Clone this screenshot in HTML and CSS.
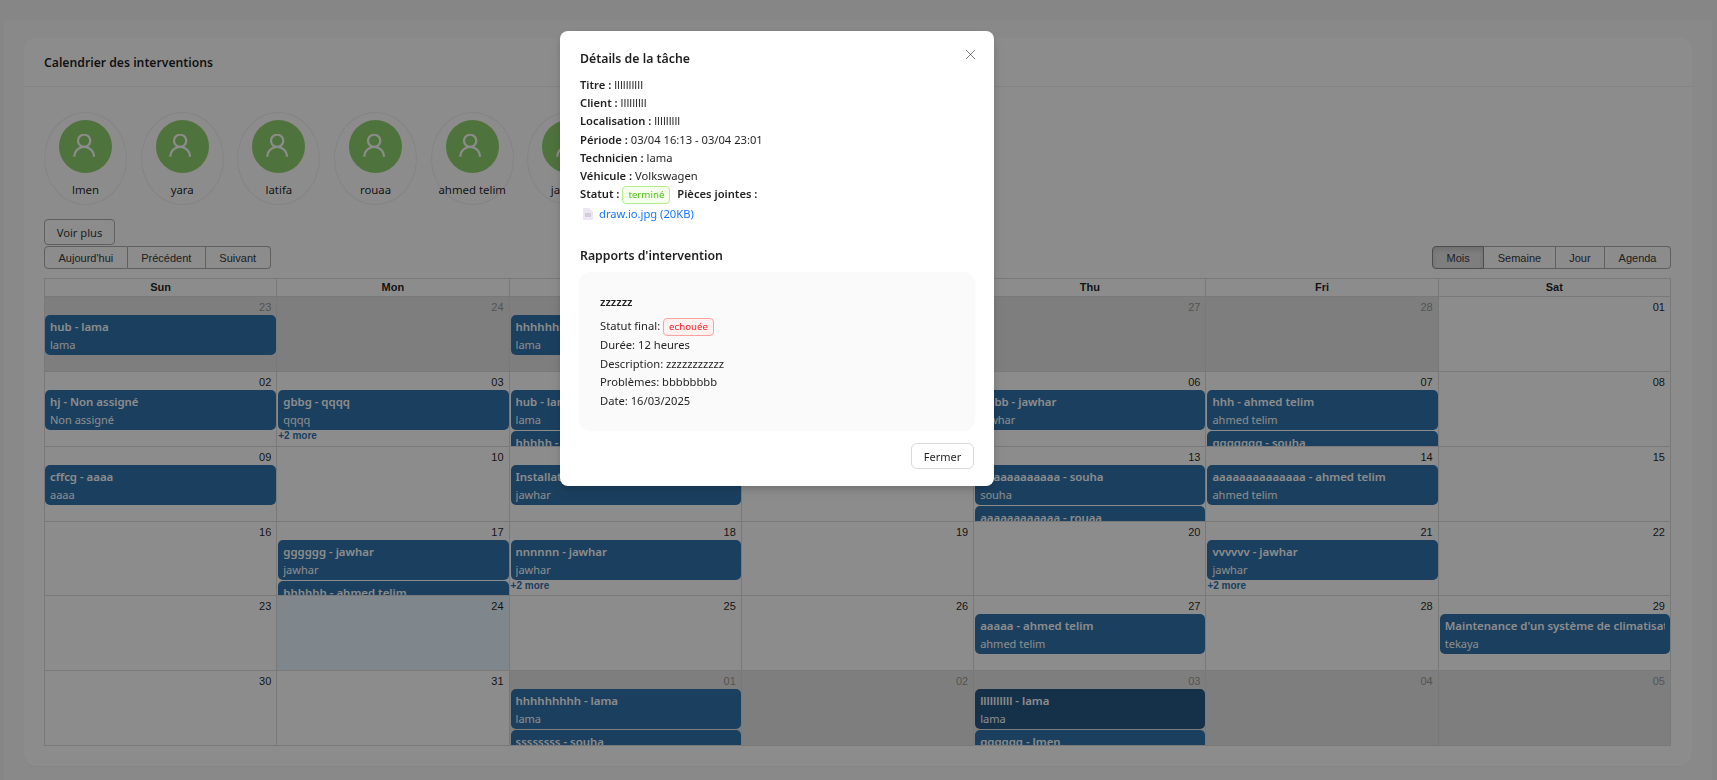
FILE: index.html
```html
<!DOCTYPE html>
<html lang="fr">
<head>
    <meta charset="UTF-8">
    <meta name="viewport" content="width=device-width, initial-scale=1.0">
    <title>Calendrier des interventions</title>
    <link rel="stylesheet" href="styles.css">
</head>
<body>
    <div class="panel">
        <div class="card">
            <div class="card-head">Calendrier des interventions</div>
            <div class="card-body">
                <div class="techs">
                    <div class="tech"><span class="avatar"><svg viewBox="64 64 896 896"><use href="#user"/></svg></span><span class="tech-name">lmen</span></div>
                    <div class="tech"><span class="avatar"><svg viewBox="64 64 896 896"><use href="#user"/></svg></span><span class="tech-name">yara</span></div>
                    <div class="tech"><span class="avatar"><svg viewBox="64 64 896 896"><use href="#user"/></svg></span><span class="tech-name">latifa</span></div>
                    <div class="tech"><span class="avatar"><svg viewBox="64 64 896 896"><use href="#user"/></svg></span><span class="tech-name">rouaa</span></div>
                    <div class="tech"><span class="avatar"><svg viewBox="64 64 896 896"><use href="#user"/></svg></span><span class="tech-name">ahmed telim</span></div>
                    <div class="tech"><span class="avatar"><svg viewBox="64 64 896 896"><use href="#user"/></svg></span><span class="tech-name">jawhar</span></div>
                </div>
                <button class="more-btn">Voir plus</button>

                <div class="toolbar">
                    <div class="btn-group">
                        <button>Aujourd'hui</button><button>Précédent</button><button>Suivant</button>
                    </div>
                    <div class="btn-group">
                        <button class="active">Mois</button><button>Semaine</button><button>Jour</button><button>Agenda</button>
                    </div>
                </div>

                <div class="calendar">
                    <div class="head-row">
                        <div>Sun</div><div>Mon</div><div>Tue</div><div>Wed</div><div>Thu</div><div>Fri</div><div>Sat</div>
                    </div>

                    <div class="week">
                        <div class="day off"><div class="num">23</div><div class="event"><b>hub - lama</b><span>lama</span></div></div>
                        <div class="day off"><div class="num">24</div></div>
                        <div class="day off"><div class="num">25</div><div class="event"><b>hhhhhhhhh - lama</b><span>lama</span></div></div>
                        <div class="day off"><div class="num">26</div></div>
                        <div class="day off"><div class="num">27</div></div>
                        <div class="day off"><div class="num">28</div></div>
                        <div class="day"><div class="num">01</div></div>
                    </div>

                    <div class="week">
                        <div class="day"><div class="num">02</div><div class="event"><b>hj - Non assigné</b><span>Non assigné</span></div></div>
                        <div class="day"><div class="num">03</div><div class="event"><b>gbbg - qqqq</b><span>qqqq</span></div><div class="show-more">+2 more</div></div>
                        <div class="day"><div class="num">04</div><div class="event"><b>hub - lama</b><span>lama</span></div><div class="event"><b>hhhhh - lama</b><span>lama</span></div></div>
                        <div class="day"><div class="num">05</div></div>
                        <div class="day"><div class="num">06</div><div class="event"><b>bbbb - jawhar</b><span>jawhar</span></div></div>
                        <div class="day"><div class="num">07</div><div class="event"><b>hhh - ahmed telim</b><span>ahmed telim</span></div><div class="event"><b>ggggggg - souha</b><span>souha</span></div></div>
                        <div class="day"><div class="num">08</div></div>
                    </div>

                    <div class="week">
                        <div class="day"><div class="num">09</div><div class="event"><b>cffcg - aaaa</b><span>aaaa</span></div></div>
                        <div class="day"><div class="num">10</div></div>
                        <div class="day"><div class="num">11</div><div class="event"><b>Installation - jawhar</b><span>jawhar</span></div></div>
                        <div class="day"><div class="num">12</div></div>
                        <div class="day"><div class="num">13</div><div class="event"><b>aaaaaaaaaaaa - souha</b><span>souha</span></div><div class="event"><b>aaaaaaaaaaaa - rouaa</b><span>rouaa</span></div></div>
                        <div class="day"><div class="num">14</div><div class="event"><b>aaaaaaaaaaaaaa - ahmed telim</b><span>ahmed telim</span></div></div>
                        <div class="day"><div class="num">15</div></div>
                    </div>

                    <div class="week">
                        <div class="day"><div class="num">16</div></div>
                        <div class="day"><div class="num">17</div><div class="event"><b>gggggg - jawhar</b><span>jawhar</span></div><div class="event"><b>hhhhhh - ahmed telim</b><span>ahmed telim</span></div></div>
                        <div class="day"><div class="num">18</div><div class="event"><b>nnnnnn - jawhar</b><span>jawhar</span></div><div class="show-more">+2 more</div></div>
                        <div class="day"><div class="num">19</div></div>
                        <div class="day"><div class="num">20</div></div>
                        <div class="day"><div class="num">21</div><div class="event"><b>vvvvvv - jawhar</b><span>jawhar</span></div><div class="show-more">+2 more</div></div>
                        <div class="day"><div class="num">22</div></div>
                    </div>

                    <div class="week">
                        <div class="day"><div class="num">23</div></div>
                        <div class="day today"><div class="num">24</div></div>
                        <div class="day"><div class="num">25</div></div>
                        <div class="day"><div class="num">26</div></div>
                        <div class="day"><div class="num">27</div><div class="event"><b>aaaaa - ahmed telim</b><span>ahmed telim</span></div></div>
                        <div class="day"><div class="num">28</div></div>
                        <div class="day"><div class="num">29</div><div class="event"><b>Maintenance d'un système de climatisation</b><span>tekaya</span></div></div>
                    </div>

                    <div class="week">
                        <div class="day"><div class="num">30</div></div>
                        <div class="day"><div class="num">31</div></div>
                        <div class="day off"><div class="num">01</div><div class="event"><b>hhhhhhhhh - lama</b><span>lama</span></div><div class="event"><b>ssssssss - souha</b><span>souha</span></div></div>
                        <div class="day off"><div class="num">02</div></div>
                        <div class="day off"><div class="num">03</div><div class="event selected"><b>llllllllll - lama</b><span>lama</span></div><div class="event"><b>gggggg - lmen</b><span>lmen</span></div></div>
                        <div class="day off"><div class="num">04</div></div>
                        <div class="day off"><div class="num">05</div></div>
                    </div>
                </div>
            </div>
        </div>
    </div>

    <div class="overlay"></div>

    <div class="modal">
        <svg class="close" viewBox="0 0 12 12"><path d="M1 1l10 10M11 1L1 11"/></svg>
        <h3>Détails de la tâche</h3>
        <p><b>Titre :</b> llllllllll</p>
        <p><b>Client :</b> lllllllll</p>
        <p><b>Localisation :</b> lllllllll</p>
        <p><b>Période :</b> 03/04 16:13 - 03/04 23:01</p>
        <p><b>Technicien :</b> lama</p>
        <p><b>Véhicule :</b> Volkswagen</p>
        <p><b>Statut :</b> <span class="tag tag-green">terminé</span> <b>Pièces jointes :</b></p>
        <p class="attachment">
            <svg viewBox="0 0 10 12"><path class="file-body" d="M0 1a1 1 0 0 1 1-1h5.500L10 3.500V11a1 1 0 0 1-1 1H1a1 1 0 0 1-1-1z"/><path class="file-line" d="M2 6h6M2 8h6"/></svg>
            <a href="#">draw.io.jpg (20KB)</a>
        </p>

        <h3 class="reports-title">Rapports d'intervention</h3>
        <div class="report">
            <h4>zzzzzz</h4>
            <p>Statut final: <span class="tag tag-red">echouée</span></p>
            <p>Durée: 12 heures</p>
            <p>Description: zzzzzzzzzzz</p>
            <p>Problèmes: bbbbbbbb</p>
            <p>Date: 16/03/2025</p>
        </div>
        <div class="modal-foot"><button>Fermer</button></div>
    </div>

    <svg width="0" height="0" class="defs">
        <symbol id="user" viewBox="64 64 896 896">
            <path d="M858.500 763.600a374 374 0 0 0-80.600-119.500 375.630 375.630 0 0 0-119.500-80.600c-.4-.2-.8-.3-1.200-.5C719.500 518 760 444.700 760 362c0-137-111-248-248-248S264 225 264 362c0 82.700 40.500 156 102.800 201.100-.4.2-.8.3-1.200.5-44.800 18.900-85 46-119.500 80.600a375.630 375.630 0 0 0-80.600 119.500A371.700 371.700 0 0 0 136 901.800a8 8 0 0 0 8 8.200h60c4.400 0 7.900-3.500 8-7.800 2-77.200 33-149.500 87.800-204.300 56.700-56.700 132-87.900 212.200-87.900s155.500 31.200 212.200 87.900C779 752.700 810 825 812 902.200c.1 4.400 3.600 7.800 8 7.800h60a8 8 0 0 0 8-8.200c-1-47.800-10.900-94.300-29.500-138.200zM512 534c-45.900 0-89.100-17.900-121.600-50.400S340 407.900 340 362c0-45.900 17.900-89.100 50.400-121.600S466.100 190 512 190s89.100 17.900 121.600 50.400S684 316.100 684 362c0 45.900-17.900 89.100-50.400 121.600S557.900 534 512 534z"/>
        </symbol>
    </svg>
</body>
</html>
```

FILE: styles.css
```css
* {
    box-sizing: border-box;
}

html, body {
    height: 100%;
}

body {
    margin: 0;
    padding: 20px 5px 0 4px;
    overflow: hidden;
    background-color: #f5f5f5;
    color: rgba(0, 0, 0, 0.88);
    font-family: "Noto Sans", "Open Sans", sans-serif;
    font-size: 11.200px;
}

.defs {
    position: absolute;
}

.panel {
    height: 760px;
    padding: 18px 20px 0;
    background-color: #fafafa;
}

.card {
    height: 728px;
    background-color: #fff;
    border-radius: 12px;
    box-shadow: 0 1px 2px rgba(0, 0, 0, 0.04);
}

.card-head {
    height: 49px;
    padding: 16px 20px 0;
    border-bottom: 1px solid #f0f0f0;
    font-size: 12.200px;
    font-weight: 600;
    line-height: 17px;
}

.card-body {
    padding: 25px 21px 0 20px;
}

/* techniciens */
.techs {
    display: flex;
    gap: 13.700px;
    height: 93px;
    overflow: hidden;
}

.tech {
    display: flex;
    flex-direction: column;
    align-items: center;
    flex: none;
    width: 83px;
    height: 93px;
    padding-top: 7px;
    border: 1px solid #f0f0f0;
    border-radius: 50%;
}

.avatar {
    display: flex;
    align-items: center;
    justify-content: center;
    flex: none;
    width: 53px;
    height: 53px;
    border-radius: 50%;
    background-color: #8fd16f;
}

.avatar svg {
    width: 26px;
    height: 26px;
    fill: #fff;
}

.tech-name {
    margin-top: 8px;
    font-size: 11.400px;
    line-height: 18px;
    white-space: nowrap;
}

button {
    font-family: "Liberation Sans", Arial, sans-serif;
    color: #373a3c;
    background: #fff;
    cursor: pointer;
}

.more-btn {
    display: block;
    width: 71px;
    height: 26px;
    margin-top: 14px;
    padding: 0;
    border: 1px solid #adadad;
    border-radius: 4px;
    font-family: "Noto Sans", "Open Sans", sans-serif;
    font-size: 11.200px;
}

/* barre du calendrier */
.toolbar {
    display: flex;
    justify-content: space-between;
    height: 32px;
    margin-top: 1px;
}

.btn-group {
    display: flex;
    height: 23px;
}

.btn-group button {
    padding: 0 13.500px;
    border: 1px solid #adadad;
    border-left-width: 0;
    font-size: 11px;
}

.btn-group button:first-child {
    border-left-width: 1px;
    border-radius: 4px 0 0 4px;
}

.btn-group button:last-child {
    border-radius: 0 4px 4px 0;
}

.btn-group .active {
    background-color: #e6e6e6;
    border-color: #8c8c8c;
    box-shadow: inset 0 3px 5px rgba(0, 0, 0, 0.125);
}

/* grille */
.calendar {
    border: 1px solid #ddd;
    border-left: 0;
    font-family: "Liberation Sans", Arial, sans-serif;
}

.head-row {
    display: grid;
    grid-template-columns: repeat(7, 1fr);
    height: 18px;
    border-bottom: 1px solid #ddd;
    font-size: 11px;
    font-weight: bold;
    line-height: 17px;
    text-align: center;
}

.head-row div {
    border-left: 1px solid #ddd;
}

.week {
    display: grid;
    grid-template-columns: repeat(7, 1fr);
    height: 74.800px;
    border-top: 1px solid #ddd;
}

.head-row + .week {
    height: 74px;
    border-top: 0;
}

.day {
    min-width: 0;
    overflow: hidden;
    border-left: 1px solid #ddd;
}

.off {
    background-color: #e6e6e6;
}

.off .num {
    color: #999;
}

.today {
    background-color: #eaf6ff;
}

.num {
    height: 18px;
    padding-right: 5px;
    font-size: 11px;
    line-height: 20px;
    text-align: right;
}

.event {
    height: 40px;
    margin: 0 0 1px 1px;
    padding: 3px 5px 0;
    overflow: hidden;
    border-radius: 5px;
    background-color: #3174ad;
    color: #fff;
    font-family: "Noto Sans", "Open Sans", sans-serif;
    font-size: 11px;
    line-height: 18px;
    white-space: nowrap;
}

.day:first-child .event {
    margin-left: 0;
}

.event b, .event span {
    display: block;
    overflow: hidden;
}

.event b {
    font-size: 11.400px;
    font-weight: 600;
}

.event.selected {
    background-color: #265985;
}

.show-more {
    margin-top: -1px;
    padding-left: 1px;
    color: #3174ad;
    font-size: 10px;
    font-weight: bold;
    line-height: 12px;
}

.overlay {
    position: fixed;
    inset: 0;
    background-color: rgba(0, 0, 0, 0.45);
}

/* fenetre */
.modal {
    position: fixed;
    left: 560px;
    top: 31px;
    width: 434px;
    height: 455px;
    padding: 19px 20px 0;
    background-color: #fff;
    border-radius: 8px;
    box-shadow: 0 6px 16px rgba(0, 0, 0, 0.08), 0 3px 6px rgba(0, 0, 0, 0.12);
}

.close {
    position: absolute;
    top: 18px;
    right: 18px;
    width: 11px;
    height: 11px;
    fill: none;
    stroke: rgba(0, 0, 0, 0.55);
    stroke-width: 1;
}

.modal h3 {
    margin: 0 0 9px;
    font-size: 12.300px;
    font-weight: 600;
    line-height: 17px;
}

.modal p {
    margin: 0;
    line-height: 18.200px;
}

.modal p b {
    font-weight: 600;
}

.tag {
    display: inline-block;
    height: 18px;
    padding: 0 5px;
    margin: 0 4px 0 0;
    border: 1px solid;
    border-radius: 4px;
    font-size: 9.700px;
    line-height: 16px;
    vertical-align: middle;
}

.tag-green {
    color: #52c41a;
    background-color: #f6ffed;
    border-color: #b7eb8f;
}

.tag-red {
    color: #f5222d;
    background-color: #fff1f0;
    border-color: #ffa39e;
}

.modal .attachment {
    display: flex;
    align-items: center;
    gap: 6px;
    margin-top: 1px;
    padding-left: 3px;
}

.attachment svg {
    width: 10px;
    height: 12px;
}

.file-body {
    fill: #ece6f2;
}

.file-line {
    fill: none;
    stroke: #b9b2c4;
}

.attachment a {
    color: #1677ff;
    text-decoration: none;
}

.modal .reports-title {
    margin: 24px 0 8px;
}

.report {
    height: 158px;
    margin: 0 -1px;
    padding: 21px 21px;
    background-color: #fafafa;
    border-radius: 12px;
    box-shadow: 0 1px 2px rgba(0, 0, 0, 0.03);
}

.report h4 {
    margin: 0 0 6px;
    font-size: 11.200px;
    font-weight: 600;
    line-height: 18px;
}

.modal .report p {
    line-height: 18.500px;
}

.modal-foot {
    display: flex;
    justify-content: flex-end;
    margin-top: 13px;
}

.modal-foot button {
    width: 63px;
    height: 26px;
    padding: 0;
    background-color: #fff;
    border: 1px solid #d9d9d9;
    border-radius: 6px;
    color: rgba(0, 0, 0, 0.88);
    font-family: "Noto Sans", "Open Sans", sans-serif;
    font-size: 11px;
}
```
